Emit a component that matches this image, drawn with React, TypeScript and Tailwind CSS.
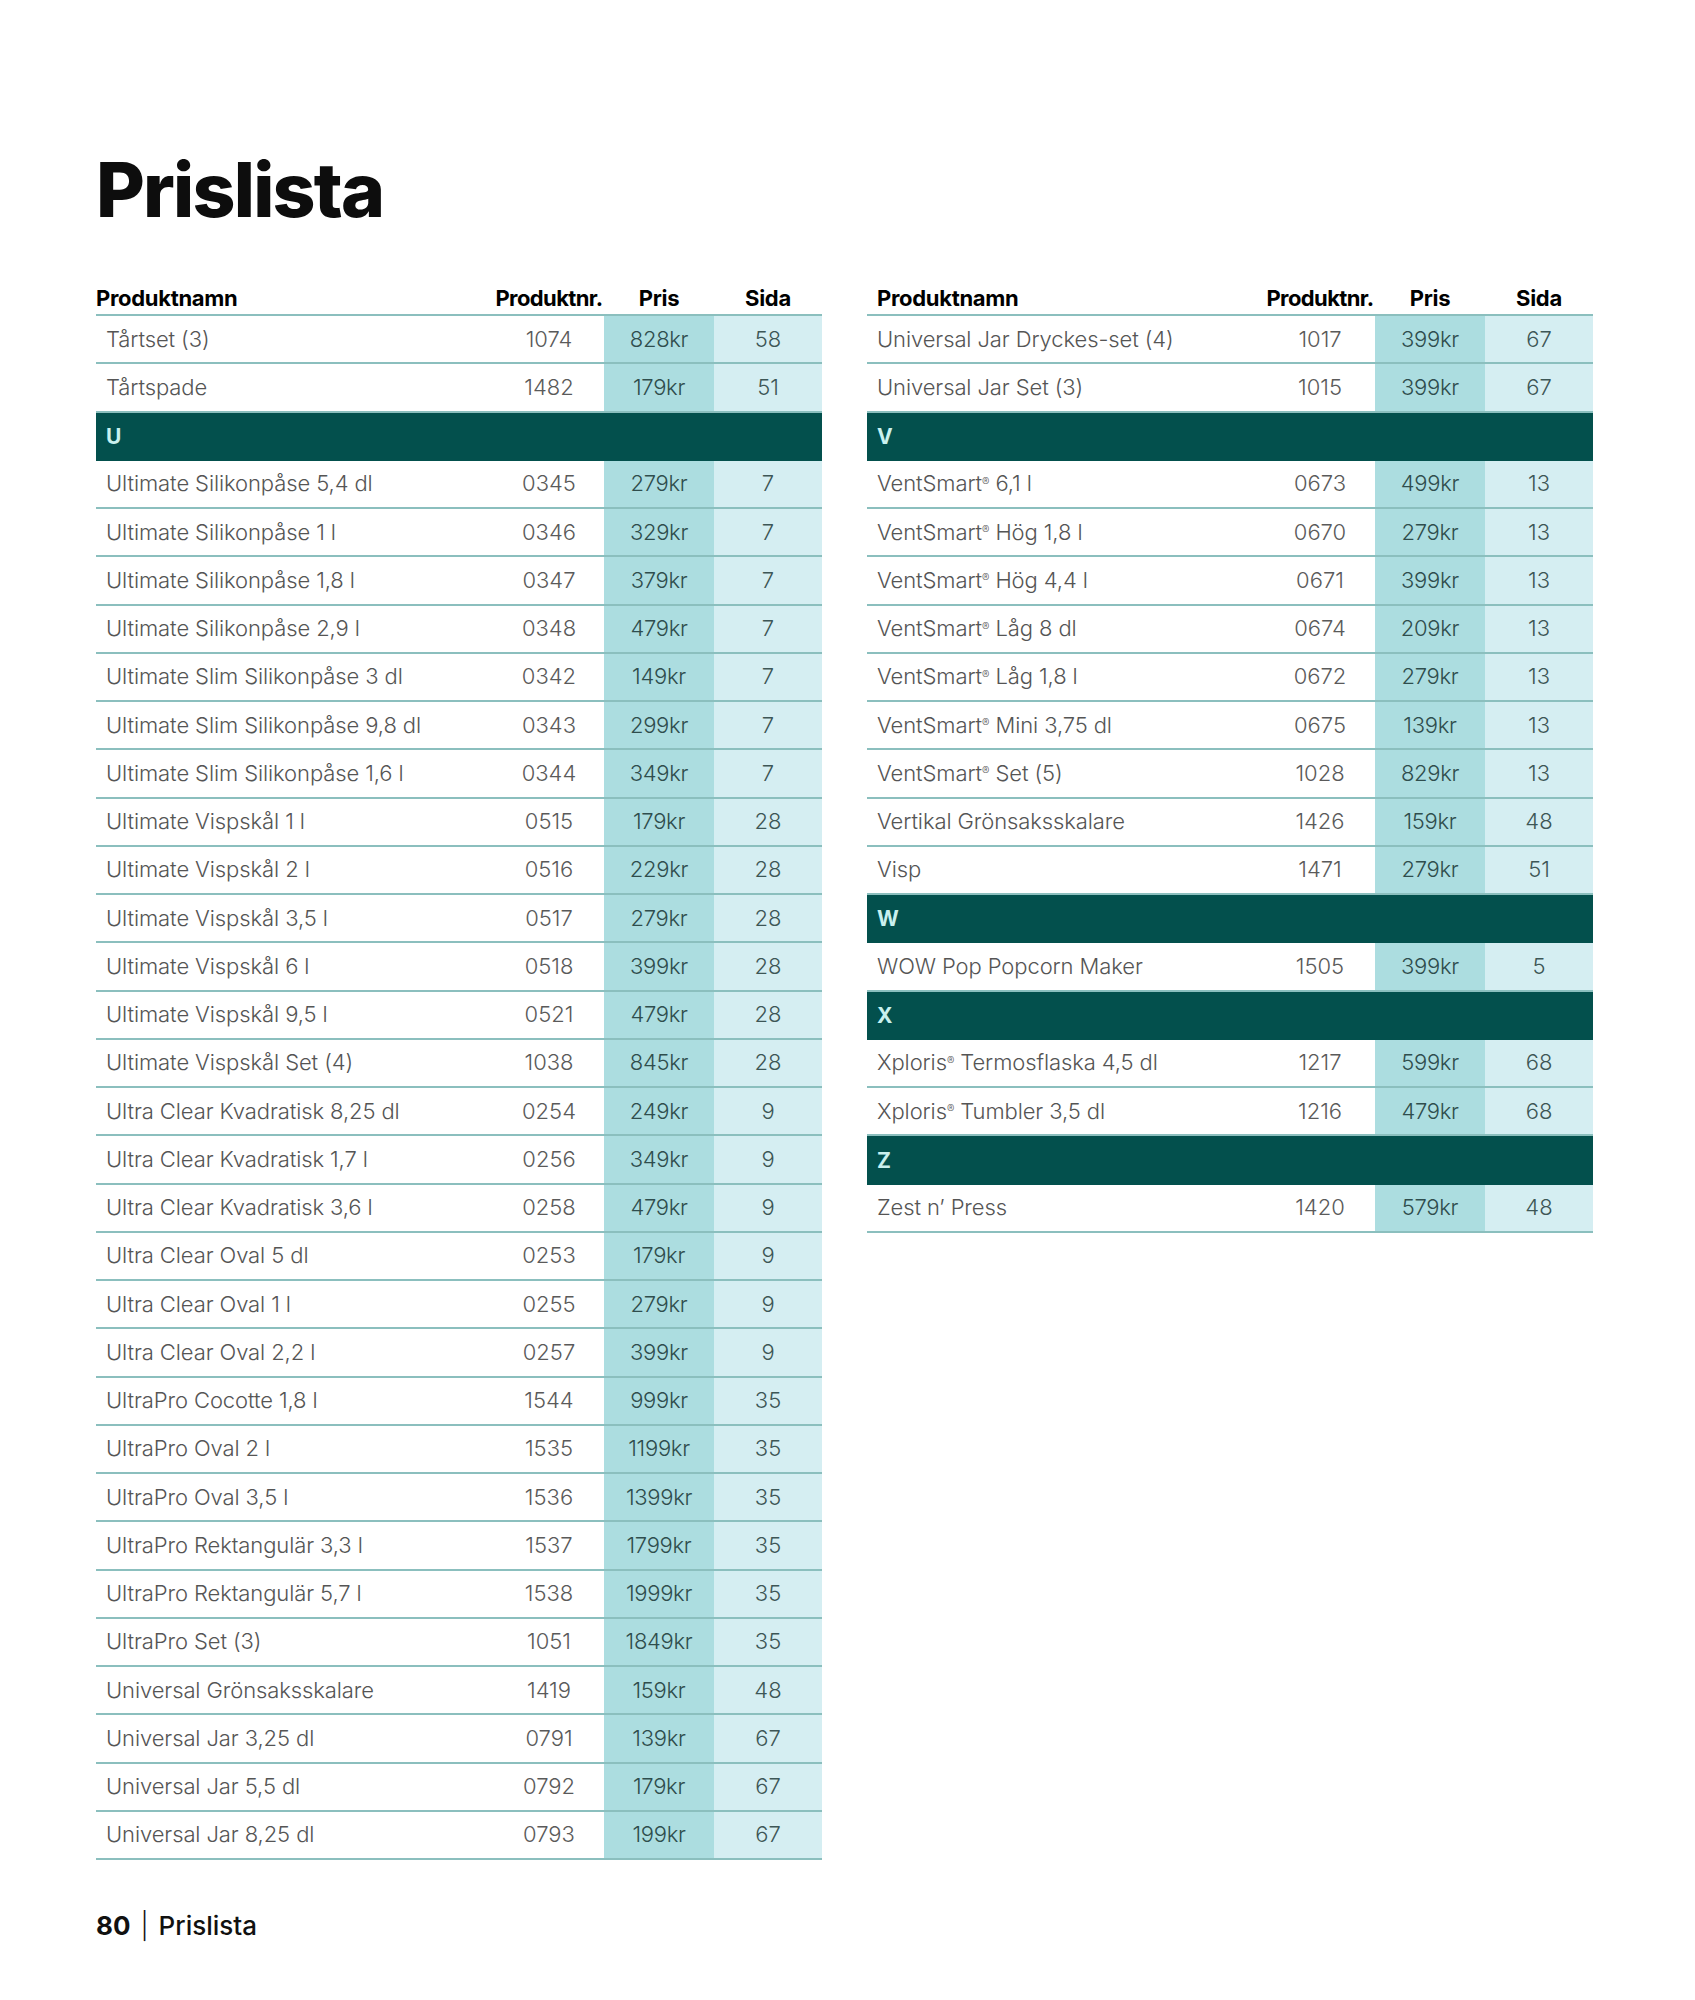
import React from "react";

type Row = { name: string; nr: string; pris: string; sida: string } | { band: string };

const left: Row[] = [
  { name: "Tårtset (3)", nr: "1074", pris: "828kr", sida: "58" },
  { name: "Tårtspade", nr: "1482", pris: "179kr", sida: "51" },
  { band: "U" },
  { name: "Ultimate Silikonpåse 5,4 dl", nr: "0345", pris: "279kr", sida: "7" },
  { name: "Ultimate Silikonpåse 1 l", nr: "0346", pris: "329kr", sida: "7" },
  { name: "Ultimate Silikonpåse 1,8 l", nr: "0347", pris: "379kr", sida: "7" },
  { name: "Ultimate Silikonpåse 2,9 l", nr: "0348", pris: "479kr", sida: "7" },
  { name: "Ultimate Slim Silikonpåse 3 dl", nr: "0342", pris: "149kr", sida: "7" },
  { name: "Ultimate Slim Silikonpåse 9,8 dl", nr: "0343", pris: "299kr", sida: "7" },
  { name: "Ultimate Slim Silikonpåse 1,6 l", nr: "0344", pris: "349kr", sida: "7" },
  { name: "Ultimate Vispskål 1 l", nr: "0515", pris: "179kr", sida: "28" },
  { name: "Ultimate Vispskål 2 l", nr: "0516", pris: "229kr", sida: "28" },
  { name: "Ultimate Vispskål 3,5 l", nr: "0517", pris: "279kr", sida: "28" },
  { name: "Ultimate Vispskål 6 l", nr: "0518", pris: "399kr", sida: "28" },
  { name: "Ultimate Vispskål 9,5 l", nr: "0521", pris: "479kr", sida: "28" },
  { name: "Ultimate Vispskål Set (4)", nr: "1038", pris: "845kr", sida: "28" },
  { name: "Ultra Clear Kvadratisk 8,25 dl", nr: "0254", pris: "249kr", sida: "9" },
  { name: "Ultra Clear Kvadratisk 1,7 l", nr: "0256", pris: "349kr", sida: "9" },
  { name: "Ultra Clear Kvadratisk 3,6 l", nr: "0258", pris: "479kr", sida: "9" },
  { name: "Ultra Clear Oval 5 dl", nr: "0253", pris: "179kr", sida: "9" },
  { name: "Ultra Clear Oval 1 l", nr: "0255", pris: "279kr", sida: "9" },
  { name: "Ultra Clear Oval 2,2 l", nr: "0257", pris: "399kr", sida: "9" },
  { name: "UltraPro Cocotte 1,8 l", nr: "1544", pris: "999kr", sida: "35" },
  { name: "UltraPro Oval 2 l", nr: "1535", pris: "1199kr", sida: "35" },
  { name: "UltraPro Oval 3,5 l", nr: "1536", pris: "1399kr", sida: "35" },
  { name: "UltraPro Rektangulär 3,3 l", nr: "1537", pris: "1799kr", sida: "35" },
  { name: "UltraPro Rektangulär 5,7 l", nr: "1538", pris: "1999kr", sida: "35" },
  { name: "UltraPro Set (3)", nr: "1051", pris: "1849kr", sida: "35" },
  { name: "Universal Grönsaksskalare", nr: "1419", pris: "159kr", sida: "48" },
  { name: "Universal Jar 3,25 dl", nr: "0791", pris: "139kr", sida: "67" },
  { name: "Universal Jar 5,5 dl", nr: "0792", pris: "179kr", sida: "67" },
  { name: "Universal Jar 8,25 dl", nr: "0793", pris: "199kr", sida: "67" },
];

const right: Row[] = [
  { name: "Universal Jar Dryckes-set (4)", nr: "1017", pris: "399kr", sida: "67" },
  { name: "Universal Jar Set (3)", nr: "1015", pris: "399kr", sida: "67" },
  { band: "V" },
  { name: "VentSmart® 6,1 l", nr: "0673", pris: "499kr", sida: "13" },
  { name: "VentSmart® Hög 1,8 l", nr: "0670", pris: "279kr", sida: "13" },
  { name: "VentSmart® Hög 4,4 l", nr: "0671", pris: "399kr", sida: "13" },
  { name: "VentSmart® Låg 8 dl", nr: "0674", pris: "209kr", sida: "13" },
  { name: "VentSmart® Låg 1,8 l", nr: "0672", pris: "279kr", sida: "13" },
  { name: "VentSmart® Mini 3,75 dl", nr: "0675", pris: "139kr", sida: "13" },
  { name: "VentSmart® Set (5)", nr: "1028", pris: "829kr", sida: "13" },
  { name: "Vertikal Grönsaksskalare", nr: "1426", pris: "159kr", sida: "48" },
  { name: "Visp", nr: "1471", pris: "279kr", sida: "51" },
  { band: "W" },
  { name: "WOW Pop Popcorn Maker", nr: "1505", pris: "399kr", sida: "5" },
  { band: "X" },
  { name: "Xploris® Termosflaska 4,5 dl", nr: "1217", pris: "599kr", sida: "68" },
  { name: "Xploris® Tumbler 3,5 dl", nr: "1216", pris: "479kr", sida: "68" },
  { band: "Z" },
  { name: "Zest n’ Press", nr: "1420", pris: "579kr", sida: "48" },
];

// Split on ® so the mark can sit raised and small like in the print.
function Name({ text }: { text: string }) {
  const parts = text.split("®");
  return (
    <span>
      {parts.map((p, i) => (
        <React.Fragment key={i}>
          {p}
          {i < parts.length - 1 && <sup className="text-[11px] -top-[0.5em]">®</sup>}
        </React.Fragment>
      ))}
    </span>
  );
}

const cols = "grid grid-cols-[1fr_110px_110px_108px]";

function PriceTable({ rows, indentHead }: { rows: Row[]; indentHead?: boolean }) {
  return (
    <div className="w-[726px]">
      <div className={`${cols} h-[34px] items-center border-b-2 border-[#8bbfbe] text-[22px] font-bold text-black tracking-[-0.3px]`}>
        <div className={indentHead ? "pl-[10px]" : ""}>Produktnamn</div>
        <div className="text-center whitespace-nowrap tracking-[-0.6px]">Produktnr.</div>
        <div className="text-center">Pris</div>
        <div className="text-center">Sida</div>
      </div>
      {rows.map((r, i) =>
        "band" in r ? (
          <div key={i} className="h-[48.25px] bg-[#03504d] flex items-center pl-[10px] text-[21px] font-bold text-[#c9f1ef]">
            {r.band}
          </div>
        ) : (
          <div key={i} className={`${cols} h-[48.25px] border-b-2 border-[#8bbfbe] text-[22px] font-light`}>
            <div className="flex items-center pl-[10px] text-[#555] whitespace-nowrap tracking-[-0.1px]">
              <Name text={r.name} />
            </div>
            <div className="flex items-center justify-center text-[#5a5a5a]">{r.nr}</div>
            <div className="flex items-center justify-center bg-[#acdde0] text-[#2f4d4d] tracking-[-0.3px]">{r.pris}</div>
            <div className="flex items-center justify-center bg-[#d5eef2] text-[#3d5656]">{r.sida}</div>
          </div>
        )
      )}
    </div>
  );
}

export default function App() {
  return (
    <div className="w-[1695px] h-[2000px] bg-white pl-[96px] pt-[152px] font-['Inter',sans-serif]">
      <h1 className="text-[75px] leading-none font-extrabold tracking-[-1.8px] text-[#0d0d0d]">Prislista</h1>
      <div className="mt-[55px] flex gap-[45px] items-start">
        <PriceTable rows={left} />
        <PriceTable rows={right} indentHead />
      </div>
      <div className="mt-[46px] flex items-center gap-[10px] text-[26px] text-[#111]">
        <span className="font-bold">80</span>
        <span className="font-light">|</span>
        <span className="font-medium">Prislista</span>
      </div>
    </div>
  );
}
